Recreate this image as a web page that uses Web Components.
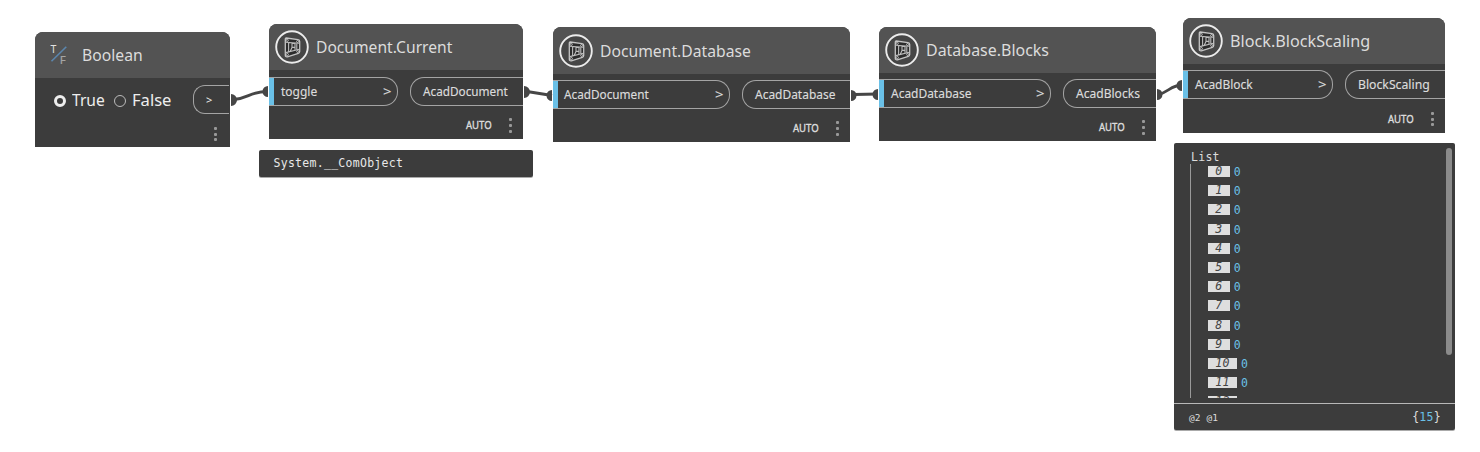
<!DOCTYPE html>
<html lang="en">
<head>
<meta charset="utf-8">
<title>Graph</title>
<style>
html,body{margin:0;background:#fff}
</style>
</head>
<body>
<graph-canvas></graph-canvas>
<script>
// Text set to a given width; glyphs are condensed or widened horizontally.
class FitText extends HTMLElement {
  connectedCallback() {
    const r = this.attachShadow({mode: 'open'});
    r.innerHTML = `<style>:host{display:block;flex:none;white-space:nowrap;width:${this.getAttribute('w')}px}
      span{display:inline-block;transform-origin:0 50%;white-space:pre}</style><span><slot></slot></span>`;
    const s = r.querySelector('span');
    s.style.transform = `scaleX(${+this.getAttribute('w') / s.offsetWidth})`;
  }
}

class NodeIcon extends HTMLElement {
  connectedCallback() {
    this.attachShadow({mode: 'open'}).innerHTML = `<style>:host{display:block;flex:none;width:34px;height:34px}svg{display:block}</style>
    <svg width="34" height="34" viewBox="0 0 34 34" fill="none">
      <circle cx="17" cy="17" r="15.8" fill="#464646" stroke="#ececec" stroke-width="1.9"/>
      <path d="M11.2 8 23 9.6Q24.7 9.9 24.7 11.5V21.4Q24.7 22.8 23.3 23.3L12.4 26.8Q10.3 27.2 10.3 25.2V9Q10.3 8 11.2 8Z" fill="#2c2c2c" stroke="#c4c4c4" stroke-width="1.3"/>
      <path d="M10.8 12.2 24.2 13.2M10.8 22.6 24.2 19.2M13.6 12.6V21.8M21.8 13V19.8M17 13.2 20 13.4V17.4H17ZM17 17.4 15.2 21.4M20 17.4V20" stroke="#bcbcbc" stroke-width="1.1"/>
      <g fill="#262626" stroke="#ddd" stroke-width=".8"><circle cx="12.2" cy="10.3" r="1.1"/><circle cx="22.6" cy="11.5" r="1"/><circle cx="12.3" cy="24.6" r="1.1"/><circle cx="22.7" cy="21.5" r="1"/></g>
    </svg>`;
  }
}

class BoolIcon extends HTMLElement {
  connectedCallback() {
    this.attachShadow({mode: 'open'}).innerHTML = `<style>:host{display:block;flex:none;width:18px;height:24px}svg{display:block}</style>
    <svg width="18" height="24" viewBox="0 0 18 24" font-family="Noto Sans,sans-serif">
      <path d="M1.5 18.3 16.3 3.8" stroke="#5b86ad" stroke-width="1.6"/>
      <text x="0.4" y="9.7" font-size="10.5" fill="#e0e0e0">T</text>
      <text x="9.8" y="21" font-size="11.5" stroke="#a5a5a5" stroke-width=".2" fill="#a5a5a5">F</text>
    </svg>`;
  }
}

class MenuDots extends HTMLElement {
  connectedCallback() {
    this.attachShadow({mode: 'open'}).innerHTML = `<style>:host{display:flex;flex:none;flex-direction:column;gap:2.6px;width:3px}i{width:3px;height:3px;background:#999;border-radius:1px}</style><i></i><i></i><i></i>`;
  }
}

class GraphNode extends HTMLElement {
  connectedCallback() {
    const a = n => this.getAttribute(n);
    this.attachShadow({mode: 'open'}).innerHTML = `<style>
      :host{display:flex;flex-direction:column;box-sizing:border-box;background:#3c3c3c;border-radius:8px 8px 0 0;overflow:hidden;font-family:"Noto Sans",sans-serif;color:#dcdcdc}
      header{display:flex;align-items:center;height:${a('head')}px;flex:none;background:#535353;font-size:17px;line-height:24px;padding-left:${a('pad')}px;gap:7px;box-sizing:border-box}
      header node-icon{margin-top:${a('icon') || 0}px}
      .ports{display:flex;justify-content:space-between;margin-top:${a('gap')}px;font-size:13px;line-height:18px;-webkit-text-stroke:.15px #dcdcdc}
      .port{box-sizing:border-box;height:29px;border:1px solid #a4a4a4;display:flex;align-items:center;padding-bottom:1px}
      .in{width:${a('in')}px;border-left:0;border-radius:0 14px 14px 0;padding-right:6px;padding-bottom:0}
      .in .bar{width:5px;height:27px;background:#6ac0e7;flex:none}
      .in fit-text{margin-bottom:2px}
      .in fit-text:nth-of-type(1){margin-left:${a('ip') || 6}px;margin-right:auto}
      .out{width:${a('out')}px;border-radius:14px 0 0 14px;border-right:0;padding-left:${a('op')}px}
      footer{display:flex;align-items:center;justify-content:flex-end;height:28px;margin-top:6px;padding-right:11px;gap:18px;font-size:10.5px;line-height:16px;-webkit-text-stroke:.35px #dcdcdc}
      footer fit-text{margin-bottom:1px}
    </style>
    <header><node-icon></node-icon><fit-text w="${a('tw')}">${a('name')}</fit-text></header>
    <div class="ports"><div class="port in"><div class="bar"></div><fit-text w="${a('iw')}">${a('input')}</fit-text><fit-text w="8">&gt;</fit-text></div>
    <div class="port out"><fit-text w="${a('ow')}">${a('output')}</fit-text></div></div>
    <footer><fit-text w="25.5">AUTO</fit-text><menu-dots></menu-dots></footer>`;
  }
}

class BooleanNode extends HTMLElement {
  connectedCallback() {
    this.attachShadow({mode: 'open'}).innerHTML = `<style>
      :host{display:flex;flex-direction:column;background:#3c3c3c;border-radius:8px 8px 0 0;overflow:hidden;font-family:"Noto Sans",sans-serif;color:#dcdcdc}
      header{display:flex;align-items:center;height:46px;background:#535353;font-size:17px;line-height:24px;padding-left:15px;gap:14px}
      .row{display:flex;align-items:center;height:29px;margin-top:7px;padding-left:19px;font-size:17px;line-height:24px;color:#eee}
      .r{box-sizing:border-box;width:12px;height:12px;border-radius:50%;border:1px solid #bbb;flex:none;margin-top:2px}
      .on{border:3.7px solid #eee}
      .row fit-text{margin:0 9px 0 6px}
      .out{box-sizing:border-box;width:36px;height:29px;margin:0 1px 0 auto;border:1px solid #a4a4a4;border-right:0;border-radius:12px 0 0 12px;display:flex;align-items:center;padding-left:12px;font-size:11px}
      .out fit-text{margin:0}
      footer{display:flex;justify-content:flex-end;padding:13px 13px 0 0}
    </style>
    <header><bool-icon></bool-icon><fit-text w="61">Boolean</fit-text></header>
    <div class="row"><div class="r on"></div><fit-text w="33">True</fit-text><div class="r"></div><fit-text w="39">False</fit-text><div class="out"><fit-text w="6">&gt;</fit-text></div></div>
    <footer><menu-dots></menu-dots></footer>`;
  }
}

class PreviewBubble extends HTMLElement {
  connectedCallback() {
    this.attachShadow({mode: 'open'}).innerHTML = `<style>:host{display:flex;align-items:center;box-sizing:border-box;padding:0 0 1px 14.5px;background:#3c3c3c;border-radius:2px;box-shadow:0 1px 0 #aaa;font:11.5px/16px "DejaVu Sans Mono",monospace;letter-spacing:.28px;color:#e8e8e8}</style><slot></slot>`;
  }
}

class ListPreview extends HTMLElement {
  connectedCallback() {
    const rows = Array.from({length: 13}, (_, i) => `<div class="item"><span class="idx">${i}</span>${i < 12 ? '<span class="val">0</span>' : ''}</div>`).join('');
    this.attachShadow({mode: 'open'}).innerHTML = `<style>
      :host{display:grid;grid-template-rows:260px 1fr;background:#3c3c3c;border-radius:2px;box-shadow:0 1px 0 #aaa;font:11.5px/16px "DejaVu Sans Mono",monospace;letter-spacing:.28px;color:#dcdcdc}
      .body{display:flex;justify-content:space-between;padding:5px 3px 5px 16px;min-height:0;box-sizing:border-box}
      .tree{display:flex;flex-direction:column;height:250px}
      .label{height:16px;line-height:19px;padding-left:1px;flex:none}
      .items{height:234px;overflow:hidden;border-left:1.5px solid #999;padding-left:16.5px;box-sizing:border-box}
      .item{display:flex;height:19.2px;gap:4px;align-items:flex-start}
      .idx{box-sizing:border-box;height:11px;margin-top:2px;line-height:11px;padding:0 7.2px 0 7.8px;background:#dedede;color:#444;font-style:italic}
      .val{line-height:16px;color:#6ac0e7}
      .bar{width:6px;height:207px;border-radius:3px;background:#8b8b8b}
      footer{border-top:1px solid #b8b8b8;display:flex;align-items:center;justify-content:space-between;padding:0 14px 0 15px}
      .lv{font-size:9.5px;letter-spacing:.1px;padding-top:2px}
      b{font-weight:400;color:#6ac0e7}
    </style>
    <div class="body"><div class="tree"><div class="label">List</div><div class="items">${rows}</div></div><div class="bar"></div></div>
    <footer><span class="lv">@2 @1</span><span>{<b>15</b>}</span></footer>`;
  }
}

class GraphCanvas extends HTMLElement {
  connectedCallback() {
    this.attachShadow({mode: 'open'}).innerHTML = `<style>
      :host{display:block;position:relative;width:1480px;height:452px;background:#fff;overflow:hidden}
      .at{position:absolute}
      svg{position:absolute;left:0;top:0}
    </style>
    <svg width="1480" height="452" fill="none" stroke="#464646" stroke-width="2.9">
      <path d="M234 99.5C249 98 250 91.5 268 91.5M527 91.5 552 95.5M854 94.5 878 94M1159 94.5C1168 92 1172 85 1182 85"/>
      <g fill="#464646" stroke="none">
        <path d="M231 94a5.5 5.5 0 0 1 0 12ZM524 86a5.5 5.5 0 0 1 0 12ZM851 90a5.5 5.5 0 0 1 0 11ZM1157 89a5.5 5.5 0 0 1 0 11Z"/>
        <path d="M268 86a5.5 5.5 0 0 0 0 11ZM552 90a5.5 5.5 0 0 0 0 11ZM878 89a5.5 5.5 0 0 0 0 11ZM1182 80a5.5 5.5 0 0 0 0 11Z"/>
      </g>
    </svg>
    <boolean-node class="at" style="left:35px;top:32px;width:195px;height:115px"></boolean-node>
    <graph-node class="at" style="left:269px;top:24px;width:254px;height:115px" head="46" pad="6" gap="7" name="Document.Current" tw="136" input="toggle" iw="36" in="129" ip="6.5" output="AcadDocument" out="113" ow="85" op="11.5"></graph-node>
    <graph-node class="at" style="left:553px;top:27px;width:297px;height:115px" head="47" pad="6" gap="6" name="Document.Database" tw="150.5" input="AcadDocument" iw="85" in="177" output="AcadDatabase" out="108" ow="80" op="11.5"></graph-node>
    <graph-node class="at" style="left:879px;top:27px;width:277px;height:114px" head="46" pad="6" icon="-1" gap="6" name="Database.Blocks" tw="123" input="AcadDatabase" iw="80" in="172" ip="6.5" output="AcadBlocks" out="93" ow="64" op="12"></graph-node>
    <graph-node class="at" style="left:1183px;top:18px;width:262px;height:115px" head="46" pad="6" gap="6" name="Block.BlockScaling" tw="140" input="AcadBlock" iw="58" in="150" ip="6.5" output="BlockScaling" out="100" ow="71.5" op="12"></graph-node>
    <preview-bubble class="at" style="left:259px;top:150px;width:274px;height:27px">System.__ComObject</preview-bubble>
    <list-preview class="at" style="left:1174px;top:143px;width:281px;height:287px"></list-preview>`;
  }
}
customElements.define('fit-text', FitText);
customElements.define('node-icon', NodeIcon);
customElements.define('bool-icon', BoolIcon);
customElements.define('menu-dots', MenuDots);
customElements.define('graph-node', GraphNode);
customElements.define('boolean-node', BooleanNode);
customElements.define('preview-bubble', PreviewBubble);
customElements.define('list-preview', ListPreview);
customElements.define('graph-canvas', GraphCanvas);
</script>
</body>
</html>
